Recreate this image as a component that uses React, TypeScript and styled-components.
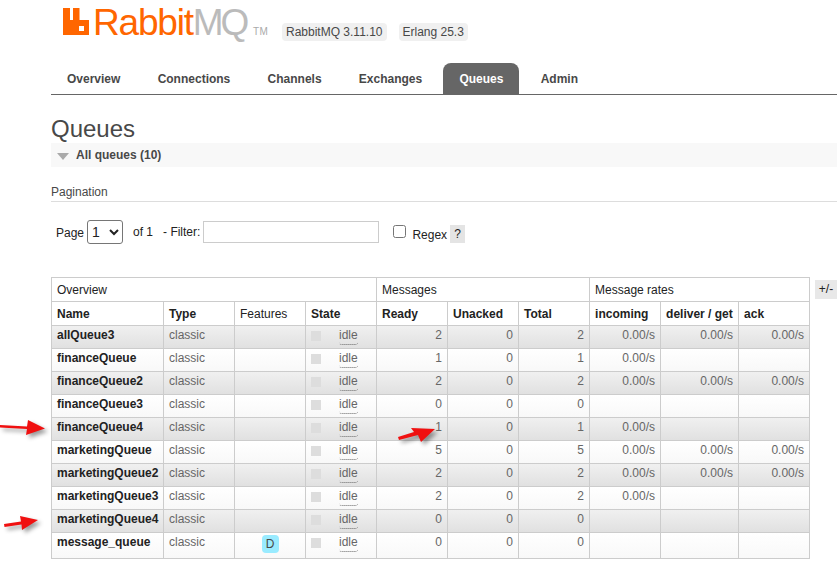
import React from 'react';
import styled, { createGlobalStyle } from 'styled-components';

const Global = createGlobalStyle`
  html, body { margin: 0; padding: 0; background: #fff; }
  body { font-family: "Liberation Sans", Arial, sans-serif; font-size: 12px; color: #484848; overflow: hidden; }
`;
const Page = styled.div`
  position: relative;
  width: 837px;
  height: 565px;
  overflow: hidden;
  padding-left: 51px;
  box-sizing: border-box;
`;
const Header = styled.header`
  height: 63px;
  display: flex;
  align-items: flex-start;
`;
const Logo = styled.div`
  display: flex;
  align-items: flex-start;
  width: 231px;
  padding: 8px 0 0 12px;
  box-sizing: border-box;
`;
const LogoText = styled.span`
  font-family: "Liberation Sans", sans-serif;
  font-size: 37px;
  line-height: 42px;
  letter-spacing: -1.2px;
  color: #f60;
  margin: -6px 0 0 4px;
`;
const Grey = styled.span`
  color: #bbb;
  letter-spacing: -3.2px;
`;
const Tm = styled.span`
  font-size: 10px;
  line-height: 10px;
  letter-spacing: 0.5px;
  color: #aaa;
  margin: 19px 0 0 7px;
`;
const Versions = styled.div`
  display: flex;
  gap: 12px;
  padding-top: 23px;
`;
const Pill = styled.span`
  background: #f0f0f0;
  border-radius: 4px;
  padding: 0 4px;
  height: 18px;
  line-height: 18px;
`;
const Nav = styled.nav`
  display: flex;
  gap: 5.25px;
  height: 31px;
  width: 786px;
  border-bottom: 1px solid #666;
`;
const Tab = styled.a<{ $active?: boolean }>`
  padding: 0 16px;
  font-weight: bold;
  line-height: 32px;
  color: ${p => (p.$active ? '#fff' : '#484848')};
  background: ${p => (p.$active ? '#666' : 'transparent')};
  border-radius: 8px 8px 0 0;
`;
const Title = styled.h1`
  margin: 0;
  padding-top: 21px;
  height: 27px;
  font-size: 24px;
  line-height: 26px;
  font-weight: normal;
  color: #484848;
`;
const Section = styled.div`
  display: flex;
  align-items: center;
  gap: 7px;
  height: 24px;
  padding-left: 6px;
  background: #f8f8f8;
  font-weight: bold;
`;
const Triangle = styled.span`
  width: 0;
  height: 0;
  border-left: 6px solid transparent;
  border-right: 6px solid transparent;
  border-top: 7px solid #aaa;
  margin-top: 2px;
`;
const SubTitle = styled.div`
  margin-top: 17px;
  height: 17px;
  line-height: 16px;
  border-bottom: 1px solid #ddd;
`;
const Pager = styled.div`
  display: flex;
  align-items: center;
  height: 75px;
  padding: 0 0 15px 5px;
  box-sizing: border-box;
  color: #222;
`;
const PageLabel = styled.span`margin-top: 2px;`;
const Select = styled.select`
  width: 36px;
  height: 24px;
  margin: 0 10px 0 3px;
  font: 14px "Liberation Sans", sans-serif;
  background: #fff;
  color: #222;
  border: 1px solid #767676;
  border-radius: 3px;
`;
const Filter = styled.input`
  width: 176px;
  height: 22px;
  box-sizing: border-box;
  margin: 0 14px 0 3px;
  border: 1px solid #ccc;
  background: #fff;
`;
const FilterLabel = styled.span`margin-left: 10px;`;
const Check = styled.input`
  width: 13px;
  height: 13px;
  margin: 0 6px 0 0;
  position: relative;
  top: -1px;
`;
const RegexLabel = styled.span`margin-top: 5px;`;
const Help = styled.span`
  width: 15px;
  height: 18px;
  line-height: 18px;
  text-align: center;
  background: #e4e4e4;
  margin: 4px 0 0 3px;
`;
const TableRow = styled.div`
  display: flex;
  align-items: flex-start;
  width: 786px;
`;
const Table = styled.table`
  border-collapse: collapse;
  table-layout: fixed;
  width: 758px;
  flex: none;
`;
const Col = styled.col<{ $w: number }>`
  width: ${p => p.$w}px;
`;
const Th = styled.th<{ $light?: boolean }>`
  border: 1px solid #ccc;
  height: 24px;
  padding: 0 5px;
  box-sizing: border-box;
  text-align: left;
  color: #222;
  white-space: nowrap;
  font-weight: ${p => (p.$light ? 'normal' : 'bold')};
`;
const Row = styled.tr<{ $alt: boolean }>`
  background: ${p => (p.$alt ? 'linear-gradient(#f0f0f0, #e0e0e0)' : 'linear-gradient(#fff, #f8f8f8)')};
`;
const Td = styled.td<{ $right?: boolean; $tall?: boolean }>`
  border: 1px solid #ccc;
  height: ${p => (p.$tall ? 26 : 23)}px;
  padding: 0 5px ${p => (p.$tall ? 8 : 5)}px;
  box-sizing: border-box;
  white-space: nowrap;
  color: #666;
  text-align: ${p => (p.$right ? 'right' : 'left')};
`;
const NameCell = styled(Td)`
  color: #222;
  font-weight: bold;
`;
const CenterCell = styled(Td)`
  text-align: center;
  padding-bottom: 4px;
`;
const StateCell = styled(Td)`
  padding-bottom: 0;
  vertical-align: top;
`;
const Badge = styled.span`
  display: inline-block;
  width: 17px;
  height: 18px;
  line-height: 18px;
  border-radius: 4px;
  background: #99ebff;
  text-align: center;
  color: #484848;
  margin-top: 1px;
`;
const StateWrap = styled.div`
  display: flex;
  align-items: flex-start;
  height: 20px;
  padding-top: 2px;
  box-sizing: border-box;
`;
const Dot = styled.span`
  width: 10px;
  height: 10px;
  background: #ddd;
  flex: none;
  margin-top: 3px;
`;
const Idle = styled.span`
  margin-left: 18px;
  line-height: 15px;
  height: 16px;
  border-bottom: 1px dotted #666;
  border-radius: 0 0 3px 3px;
`;
const PlusMinus = styled.span`
  width: 22px;
  height: 19px;
  line-height: 19px;
  text-align: center;
  background: #e8e8e8;
  margin-left: 5px;
  margin-top: 3px;
  color: #222;
`;
const Arrow = styled.svg<{ $x: number; $y: number }>`
  position: absolute;
  left: ${p => p.$x}px;
  top: ${p => p.$y}px;
  overflow: visible;
  filter: drop-shadow(3px 3px 2px rgba(0, 0, 0, 0.4));
`;

const rows: [string, number, number, boolean, boolean][] = [
  ['allQueue3', 2, 2, true, true],
  ['financeQueue', 1, 1, true, false],
  ['financeQueue2', 2, 2, true, true],
  ['financeQueue3', 0, 0, false, false],
  ['financeQueue4', 1, 1, true, false],
  ['marketingQueue', 5, 5, true, true],
  ['marketingQueue2', 2, 2, true, true],
  ['marketingQueue3', 2, 2, true, false],
  ['marketingQueue4', 0, 0, false, false],
  ['message_queue', 0, 0, false, false],
];
const widths = [112, 71, 71, 71, 71, 71, 71, 71, 78, 71];
const tabs = ['Overview', 'Connections', 'Channels', 'Exchanges', 'Queues', 'Admin'];

const RedArrow = ({ x, y, d }: { x: number; y: number; d: string }) => (
  <Arrow $x={x} $y={y} width="50" height="24">
    <path d={d} fill="#f01010" />
  </Arrow>
);

export default function App() {
  return (
    <Page>
      <Global />
      <Header>
        <Logo>
          <svg width="26" height="27" viewBox="0 0 26 27">
            <path fill="#f60" fillRule="evenodd" d="M0 0H7V12H10V0H16.500V12H26V27H0ZM16 18H21V23H16Z" />
          </svg>
          <LogoText>Rabbit<Grey>MQ</Grey></LogoText>
          <Tm>TM</Tm>
        </Logo>
        <Versions>
          <Pill>RabbitMQ 3.11.10</Pill>
          <Pill>Erlang 25.3</Pill>
        </Versions>
      </Header>
      <Nav>
        {tabs.map(t => <Tab key={t} $active={t === 'Queues'}>{t}</Tab>)}
      </Nav>
      <Title>Queues</Title>
      <Section><Triangle />All queues (10)</Section>
      <SubTitle>Pagination</SubTitle>
      <Pager>
        <PageLabel>Page</PageLabel>
        <Select defaultValue="1"><option>1</option></Select>
        <span>of 1</span>
        <FilterLabel>- Filter:</FilterLabel>
        <Filter />
        <Check type="checkbox" />
        <RegexLabel>Regex</RegexLabel>
        <Help>?</Help>
      </Pager>
      <TableRow>
        <Table>
          <colgroup>
            {widths.map((w, i) => <Col key={i} $w={w} />)}
          </colgroup>
          <thead>
            <tr>
              <Th $light colSpan={4}>Overview</Th>
              <Th $light colSpan={3}>Messages</Th>
              <Th $light colSpan={3}>Message rates</Th>
            </tr>
            <tr>
              <Th>Name</Th><Th>Type</Th><Th $light>Features</Th><Th>State</Th>
              <Th>Ready</Th><Th>Unacked</Th><Th>Total</Th>
              <Th>incoming</Th><Th>deliver / get</Th><Th>ack</Th>
            </tr>
          </thead>
          <tbody>
            {rows.map(([name, ready, total, inc, all], i) => {
              const tall = i === rows.length - 1;
              return (
                <Row key={name} $alt={i % 2 === 0}>
                  <NameCell $tall={tall}>{name}</NameCell>
                  <Td $tall={tall}>classic</Td>
                  <CenterCell $tall={tall}>{name === 'message_queue' && <Badge>D</Badge>}</CenterCell>
                  <StateCell $tall={tall}>
                    <StateWrap><Dot /><Idle>idle</Idle></StateWrap>
                  </StateCell>
                  <Td $right $tall={tall}>{ready}</Td>
                  <Td $right $tall={tall}>0</Td>
                  <Td $right $tall={tall}>{total}</Td>
                  <Td $right $tall={tall}>{inc ? '0.00/s' : ''}</Td>
                  <Td $right $tall={tall}>{all ? '0.00/s' : ''}</Td>
                  <Td $right $tall={tall}>{all ? '0.00/s' : ''}</Td>
                </Row>
              );
            })}
          </tbody>
        </Table>
        <PlusMinus>+/-</PlusMinus>
      </TableRow>
      <RedArrow x={0} y={420} d="M0 5L27 6.500L28 0L45 8.500L26 15L27 9L0 7.500Z" />
      <RedArrow x={398} y={426} d="M0 11L16 6L13 2L37 3L23 16L20 9L1 14Z" />
      <RedArrow x={4} y={516} d="M0 8L17 5.500L16 0L34 4L18 14L17.500 8.500L0.500 11Z" />
    </Page>
  );
}
